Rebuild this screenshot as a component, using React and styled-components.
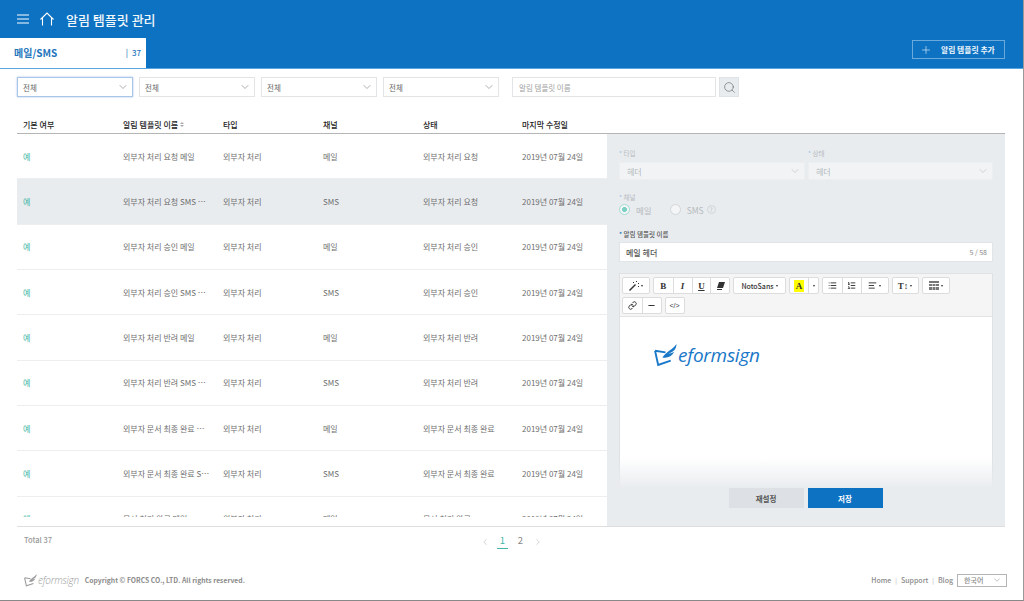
import styled, { createGlobalStyle } from 'styled-components'
import { Plus, Search, ChevronDown, ChevronLeft, ChevronRight, List, ListOrdered, AlignLeft, Link, Minus } from 'lucide-react'

const GlobalStyle = createGlobalStyle`
  html, body { margin: 0; padding: 0; background: #fff; }
  body { font-family: "Noto Sans CJK KR", "Noto Sans", sans-serif; color: #666; overflow: hidden; }
  * { box-sizing: border-box; }
`

const Page = styled.div`
  width: 1024px;
  height: 601px;
  border-right: 1px solid #999;
  border-bottom: 1px solid #888;
  display: flex;
  flex-direction: column;
`

const Header = styled.header`
  height: 69px;
  background: #0d72c2;
  border-bottom: 1px solid #5aa5dd;
  display: flex;
  flex-direction: column;
`

const TopBar = styled.div`
  height: 39px;
  display: flex;
  align-items: center;
  padding-left: 17px;
  color: #fff;
`

const Title = styled.h1`
  font-size: 13px;
  font-weight: 500;
  margin: 0 0 0 12px;
  color: #f2f7fb;
`

const HomeBtn = styled.span`
  display: flex;
  margin-left: 11px;
`

const TabBar = styled.div`
  flex: 1;
  display: flex;
  justify-content: space-between;
  align-items: flex-start;
  padding-right: 18px;
`

const Tab = styled.div`
  width: 146px;
  height: 30px;
  background: #fff;
  color: #1f76bd;
  display: flex;
  align-items: center;
  justify-content: space-between;
  padding: 0 5px 2px 14px;
`

const TabName = styled.span`
  font-size: 10px;
  font-weight: 700;
`

const TabCount = styled.span`
  font-size: 8px;
  font-weight: 500;
  word-spacing: 2px;
`

const AddButton = styled.button`
  width: 93px;
  height: 19px;
  margin-top: 2px;
  background: transparent;
  border: 1px solid #6aa9dc;
  color: #eef6fc;
  font: 700 7.8px "Noto Sans CJK KR", sans-serif;
  display: flex;
  align-items: center;
  padding: 0 0 0 7px;
  gap: 9px;
`

const Content = styled.main`
  padding: 8px 18px 0 17px;
  flex: 1;
  display: flex;
  flex-direction: column;
`

const Filters = styled.div`
  display: flex;
  height: 20px;
`

const Select = styled.div`
  width: ${p => p.$width || 116}px;
  height: ${p => p.$height || 20}px;
  margin-right: ${p => p.$gap ?? 6}px;
  background: ${p => p.$disabled ? '#f1f3f5' : '#fff'};
  border: 1px solid ${p => p.$focus ? '#a9c5e8' : p.$disabled ? '#eceef0' : '#e2e4e6'};
  box-shadow: ${p => p.$focus ? '0 0 2px #a9c5e8' : 'none'};
  color: ${p => p.$disabled ? '#b4b8bc' : '#666'};
  font-size: ${p => p.$disabled ? 8 : 7.5}px;
  display: flex;
  align-items: center;
  justify-content: space-between;
  padding: 0 3px 0 ${p => p.$disabled ? 7 : 5}px;
`

const SearchInput = styled.div`
  width: 204px;
  height: 20px;
  margin-left: 13px;
  border: 1px solid #e2e4e6;
  font-size: 7.5px;
  color: #a0a0a0;
  display: flex;
  align-items: center;
  padding-left: 6px;
`

const SearchButton = styled.div`
  width: 20px;
  height: 20px;
  margin-left: 3px;
  background: #e9ecef;
  border: 1px solid #e0e3e6;
  color: #666;
  display: flex;
  align-items: center;
  justify-content: center;
`

const TableHead = styled.div`
  margin-top: 20px;
  height: 17px;
  border-bottom: 1px solid #b5b5b5;
  display: grid;
  grid-template-columns: repeat(4, 100px) 99px auto;
  font-size: 8px;
  font-weight: 500;
  color: #222;
  padding-left: 6px;
  align-items: start;
`

const HeadCell = styled.div`
  display: flex;
  align-items: center;
  gap: 2px;
  line-height: 15px;
`

const SortMark = styled.span`
  display: inline-flex;
  flex-direction: column;
  gap: 1px;
  &::before, &::after {
    content: '';
    border-left: 2px solid transparent;
    border-right: 2px solid transparent;
  }
  &::before { border-bottom: 2px solid #aaa; }
  &::after { border-top: 2px solid #aaa; }
`

const Body = styled.div`
  display: flex;
  height: 393px;
  border-bottom: 1px solid #dedede;
`

const ListArea = styled.div`
  width: 590px;
  height: 383px;
  overflow: hidden;
`

const Row = styled.div`
  height: 45.35px;
  display: grid;
  grid-template-columns: repeat(4, 100px) 99px auto;
  padding-left: 6px;
  align-items: center;
  font-size: 8px;
  color: #6f6f6f;
  background: ${p => p.$active ? '#e9ecef' : '#fff'};
  border-bottom: 1px solid #eceeef;
`

const Yes = styled.span`
  color: #41b5a5;
`

const NameCell = styled.span`
  display: block;
  width: 87px;
  white-space: nowrap;
  overflow: hidden;
  text-overflow: ellipsis;
`

const Panel = styled.aside`
  width: 398px;
  background: #e9ecef;
  padding: 14px 12px 0;
  display: flex;
  flex-direction: column;
`

const FieldGrid = styled.div`
  display: grid;
  grid-template-columns: 189px 185px;
`

const Label = styled.div`
  font-size: 6.5px;
  line-height: 10px;
  color: ${p => p.$dim ? '#b6babe' : '#555'};
  font-weight: ${p => p.$dim ? 400 : 500};
  &::before { content: '* '; color: ${p => p.$dim ? '#9cc0e0' : '#1f76bd'}; }
`

const SelectLabel = styled(Label)`
  margin-bottom: 4px;
`

const ChannelLabel = styled(Label)`
  margin-top: 12px;
`

const Radios = styled.div`
  display: flex;
  align-items: center;
  height: 15px;
  font-size: 8.5px;
  color: #b6babe;
`

const Radio = styled.span`
  width: 11px;
  height: 11px;
  border-radius: 50%;
  border: 1px solid ${p => p.$on ? '#a5dcd4' : '#d3d6d9'};
  background: ${p => p.$on ? 'radial-gradient(circle, #7fd0c4 0 2.2px, #f3f6f7 2.8px)' : '#f3f5f6'};
  margin-right: 6px;
`

const RadioText = styled.span`
  margin-right: ${p => p.$gap || 0}px;
`

const Help = styled.span`
  width: 9px;
  height: 9px;
  margin-left: 3px;
  border-radius: 50%;
  border: 1px solid #d3d6d9;
  font-size: 6px;
  line-height: 8px;
  text-align: center;
`

const NameLabel = styled(Label)`
  margin-top: 12px;
`

const NameInput = styled.div`
  margin-top: 3px;
  height: 20px;
  background: #fff;
  border: 1px solid #e2e5e8;
  display: flex;
  align-items: center;
  justify-content: space-between;
  padding: 0 5px 0 6px;
  font-size: 8px;
  font-weight: 500;
  color: #555;
`

const Counter = styled.span`
  font-size: 7px;
  font-weight: 400;
  color: #888;
`

const Editor = styled.div`
  position: relative;
  margin-top: 11px;
  height: 215px;
  border: 1px solid #dfe1e3;
  border-bottom: 0;
  background: #fff;
  &::after {
    content: '';
    position: absolute;
    left: -1px;
    right: -1px;
    bottom: 0;
    height: 30px;
    background: linear-gradient(rgba(233, 236, 239, 0), #e9ecef);
  }
`

const Toolbar = styled.div`
  background: #f5f5f5;
  border-bottom: 1px solid #e4e4e4;
  padding: 3px 2px;
  height: 43px;
  display: flex;
  flex-wrap: wrap;
  gap: 3px;
  align-content: flex-start;
`

const ToolGroup = styled.div`
  display: flex;
  height: 17px;
  background: #fff;
  border: 1px solid #dcdcdc;
  border-radius: 2px;
`

const ToolButton = styled.span`
  width: ${p => p.$width || 18.75}px;
  display: flex;
  align-items: center;
  justify-content: center;
  gap: 2px;
  color: #333;
  font-size: 7px;
  font-weight: 500;
  & + & { border-left: 1px solid #dcdcdc; }
`

const Caret = styled.i`
  border-left: 1.5px solid transparent;
  border-right: 1.5px solid transparent;
  border-top: 2px solid #333;
`

const Marker = styled.span`
  background: #ffff00;
  font: 700 9px "Liberation Serif", serif;
  padding: 0 2px;
  line-height: 12px;
  color: #333;
`

const SerifGlyph = styled.span`
  font: ${p => p.$italic ? 'italic' : 'normal'} 700 9px "Liberation Serif", serif;
  text-decoration: ${p => p.$underline ? 'underline' : 'none'};
`

const CodeGlyph = styled.span`
  font: 400 7px "Liberation Sans", sans-serif;
`

const Canvas = styled.div`
  padding: 27px 0 0 34px;
`

const Logo = styled.div`
  display: flex;
  align-items: center;
  color: ${p => p.$muted ? '#9b9b9b' : '#1a78c9'};
`

const LogoWord = styled.span`
  font-family: "Open Sans", sans-serif;
  font-style: italic;
  font-size: ${p => p.$size}px;
  font-weight: ${p => p.$muted ? 300 : 400};
  line-height: 1;
  letter-spacing: -0.25px;
  margin-left: 1px;
`

const Actions = styled.div`
  display: flex;
  justify-content: center;
  gap: 4px;
  margin: 0 1px 0 0;
`

const ActionButton = styled.button`
  width: 75px;
  height: 20px;
  border: 0;
  padding: 0;
  background: ${p => p.$primary ? '#0d72c2' : '#dde1e5'};
  color: ${p => p.$primary ? '#fff' : '#555'};
  font: 700 7.5px "Noto Sans CJK KR", sans-serif;
`

const Pager = styled.div`
  height: 24px;
  display: grid;
  grid-template-columns: 1fr auto 1fr;
  align-items: flex-start;
  padding: 7px 0 0 1px;
  font-size: 7.5px;
  color: #999;
`

const TotalText = styled.span`
  font-weight: 500;
  line-height: 11px;
  margin-left: 6px;
`

const Pages = styled.div`
  display: flex;
  align-items: center;
  gap: 7px;
  color: #aaa;
`

const PageNo = styled.span`
  width: 11px;
  text-align: center;
  font-size: 9.5px;
  line-height: 13px;
  padding-bottom: 1px;
  color: ${p => p.$on ? '#41b5a5' : '#888'};
  border-bottom: 1px solid ${p => p.$on ? '#41b5a5' : 'transparent'};
`

const Footer = styled.footer`
  margin-top: 22px;
  display: flex;
  justify-content: space-between;
  align-items: center;
  padding: 0 0 0 7px;
  margin-right: -2px;
  height: 14px;
`

const FooterLeft = styled.div`
  display: flex;
  align-items: center;
  gap: 6px;
`

const Copy = styled.span`
  font-size: 6.8px;
  font-weight: 700;
  color: #8b8b8b;
`

const FooterLinks = styled.nav`
  display: flex;
  align-items: center;
  font-size: 7px;
  font-weight: 500;
  color: #8b8b8b;
`

const FooterLink = styled.span`
  & + &::before {
    content: '|';
    margin: 0 4px;
    font-weight: 400;
    font-size: 6px;
    color: #aaa;
  }
`

const Lang = styled.div`
  width: 50px;
  height: 13px;
  margin-left: 4px;
  border: 1px solid #b5b5b5;
  color: #888;
  display: flex;
  align-items: center;
  justify-content: space-between;
  padding: 0 4px 0 6px;
`

const rows = [
  { name: '외부자 처리 요청 메일', channel: '메일', status: '외부자 처리 요청' },
  { name: '외부자 처리 요청 SMS 메시지', channel: 'SMS', status: '외부자 처리 요청' },
  { name: '외부자 처리 승인 메일', channel: '메일', status: '외부자 처리 승인' },
  { name: '외부자 처리 승인 SMS 메시지', channel: 'SMS', status: '외부자 처리 승인' },
  { name: '외부자 처리 반려 메일', channel: '메일', status: '외부자 처리 반려' },
  { name: '외부자 처리 반려 SMS 메시지', channel: 'SMS', status: '외부자 처리 반려' },
  { name: '외부자 문서 최종 완료 메일', channel: '메일', status: '외부자 문서 최종 완료' },
  { name: '외부자 문서 최종 완료 SMS', channel: 'SMS', status: '외부자 문서 최종 완료' },
  { name: '문서 처리 완료 메일', channel: '메일', status: '문서 처리 완료' },
]

const chevron = <ChevronDown size={12} strokeWidth={1.2} color="#777" />

function MenuIcon() {
  return (
    <svg width="12" height="10" viewBox="0 0 12 10" stroke="currentColor" strokeWidth="1">
      <path d="M0 1h12M0 5h12M0 9h12" />
    </svg>
  )
}

function HomeIcon() {
  return (
    <svg width="14" height="14" viewBox="0 0 14 14" fill="none" stroke="currentColor" strokeWidth="1.1">
      <path d="M.5 7.5L7 1l6.500 6.500M2.500 5.800V13.500M11.500 5.800V13.500" />
    </svg>
  )
}

function WandIcon() {
  return (
    <svg width="10" height="10" viewBox="0 0 10 10" fill="#333">
      <path d="M0 9l6-6 1 1-6 6z" />
      <path d="M7 0h1v1H7zM9 2h1v1H9zM9 5h1v1H9zM4 1h1v1H4z" />
    </svg>
  )
}

function EraserIcon() {
  return (
    <svg width="9" height="9" viewBox="0 0 9 9" fill="#333">
      <path d="M3 1h6L7 7H1z" />
      <path d="M1 8h5v1H1z" />
    </svg>
  )
}

function GridIcon() {
  return (
    <svg width="10" height="9" viewBox="0 0 10 9" fill="#777">
      <path d="M0 0h10v2H0zM0 3h3v2H0zM3.500 3h3v2h-3zM7 3h3v2H7zM0 6h3v3H0zM3.500 6h3v3h-3zM7 6h3v3H7z" />
    </svg>
  )
}

function LogoMark({ size }) {
  return (
    <svg width={size} height={size} viewBox="0 0 22 22" fill="none">
      <path d="M1 6.500L11 8M1 6.500L4 20l12-4" stroke="currentColor" strokeWidth="1.800" />
      <path d="M8 13C12 7 17 6 21.500 0c0 5-3 8-8 9 2 .2 4-.3 6-1.500C17 12 13 14 8 13z" fill="currentColor" />
    </svg>
  )
}

function App() {
  return (
    <Page>
      <GlobalStyle />
      <Header>
        <TopBar>
          <MenuIcon />
          <HomeBtn><HomeIcon /></HomeBtn>
          <Title>알림 템플릿 관리</Title>
        </TopBar>
        <TabBar>
          <Tab>
            <TabName>메일/SMS</TabName>
            <TabCount>| 37</TabCount>
          </Tab>
          <AddButton><Plus size={12} strokeWidth={1.2} />알림 템플릿 추가</AddButton>
        </TabBar>
      </Header>

      <Content>
        <Filters>
          <Select $focus>전체{chevron}</Select>
          <Select>전체{chevron}</Select>
          <Select>전체{chevron}</Select>
          <Select $gap={0}>전체{chevron}</Select>
          <SearchInput>알림 템플릿 이름</SearchInput>
          <SearchButton><Search size={13} strokeWidth={1.2} /></SearchButton>
        </Filters>

        <TableHead>
          <HeadCell>기본 여부</HeadCell>
          <HeadCell>알림 템플릿 이름<SortMark /></HeadCell>
          <HeadCell>타입</HeadCell>
          <HeadCell>채널</HeadCell>
          <HeadCell>상태</HeadCell>
          <HeadCell>마지막 수정일</HeadCell>
        </TableHead>

        <Body>
          <ListArea>
            {rows.map((row, i) => (
              <Row key={row.name} $active={i === 1}>
                <Yes>예</Yes>
                <NameCell>{row.name}</NameCell>
                <span>외부자 처리</span>
                <span>{row.channel}</span>
                <span>{row.status}</span>
                <span>2019년 07월 24일</span>
              </Row>
            ))}
          </ListArea>

          <Panel>
            <FieldGrid>
              <div>
                <SelectLabel $dim>타입</SelectLabel>
                <Select $disabled $width={186} $height={18} $gap={0}>헤더<ChevronDown size={12} strokeWidth={1.2} color="#bbb" /></Select>
              </div>
              <div>
                <SelectLabel $dim>상태</SelectLabel>
                <Select $disabled $width={185} $height={18} $gap={0}>헤더<ChevronDown size={12} strokeWidth={1.2} color="#bbb" /></Select>
              </div>
            </FieldGrid>
            <ChannelLabel $dim>채널</ChannelLabel>
            <Radios>
              <Radio $on />
              <RadioText $gap={18}>메일</RadioText>
              <Radio />
              <RadioText>SMS</RadioText>
              <Help>?</Help>
            </Radios>
            <NameLabel>알림 템플릿 이름</NameLabel>
            <NameInput>메일 헤더<Counter>5 / 58</Counter></NameInput>

            <Editor>
              <Toolbar>
                <ToolGroup>
                  <ToolButton $width={26}><WandIcon /><Caret /></ToolButton>
                </ToolGroup>
                <ToolGroup>
                  <ToolButton><SerifGlyph>B</SerifGlyph></ToolButton>
                  <ToolButton><SerifGlyph $italic>I</SerifGlyph></ToolButton>
                  <ToolButton><SerifGlyph $underline>U</SerifGlyph></ToolButton>
                  <ToolButton><EraserIcon /></ToolButton>
                </ToolGroup>
                <ToolGroup>
                  <ToolButton $width={51}>NotoSans<Caret /></ToolButton>
                </ToolGroup>
                <ToolGroup>
                  <ToolButton $width={18}><Marker>A</Marker></ToolButton>
                  <ToolButton $width={10}><Caret /></ToolButton>
                </ToolGroup>
                <ToolGroup>
                  <ToolButton><List size={9} strokeWidth={2.5} /></ToolButton>
                  <ToolButton><ListOrdered size={9} strokeWidth={2.5} /></ToolButton>
                  <ToolButton $width={27}><AlignLeft size={9} strokeWidth={2.5} /><Caret /></ToolButton>
                </ToolGroup>
                <ToolGroup>
                  <ToolButton $width={25}><SerifGlyph>T↕</SerifGlyph><Caret /></ToolButton>
                </ToolGroup>
                <ToolGroup>
                  <ToolButton $width={26}><GridIcon /><Caret /></ToolButton>
                </ToolGroup>
                <ToolGroup>
                  <ToolButton><Link size={9} strokeWidth={2.5} /></ToolButton>
                  <ToolButton><Minus size={9} strokeWidth={3} /></ToolButton>
                </ToolGroup>
                <ToolGroup>
                  <ToolButton $width={18}><CodeGlyph>{'</>'}</CodeGlyph></ToolButton>
                </ToolGroup>
              </Toolbar>
              <Canvas>
                <Logo>
                  <LogoMark size={23} />
                  <LogoWord $size={19}>eformsign</LogoWord>
                </Logo>
              </Canvas>
            </Editor>

            <Actions>
              <ActionButton>재설정</ActionButton>
              <ActionButton $primary>저장</ActionButton>
            </Actions>
          </Panel>
        </Body>

        <Pager>
          <TotalText>Total 37</TotalText>
          <Pages>
            <ChevronLeft size={10} strokeWidth={1.2} />
            <PageNo $on>1</PageNo>
            <PageNo>2</PageNo>
            <ChevronRight size={10} strokeWidth={1.2} />
          </Pages>
        </Pager>

        <Footer>
          <FooterLeft>
            <Logo $muted>
              <LogoMark size={13} />
              <LogoWord $size={10} $muted>eformsign</LogoWord>
            </Logo>
            <Copy>Copyright © FORCS CO., LTD. All rights reserved.</Copy>
          </FooterLeft>
          <FooterLinks>
            <FooterLink>Home</FooterLink>
            <FooterLink>Support</FooterLink>
            <FooterLink>Blog</FooterLink>
            <Lang>한국어<ChevronDown size={10} strokeWidth={1.2} /></Lang>
          </FooterLinks>
        </Footer>
      </Content>
    </Page>
  )
}

export default App
